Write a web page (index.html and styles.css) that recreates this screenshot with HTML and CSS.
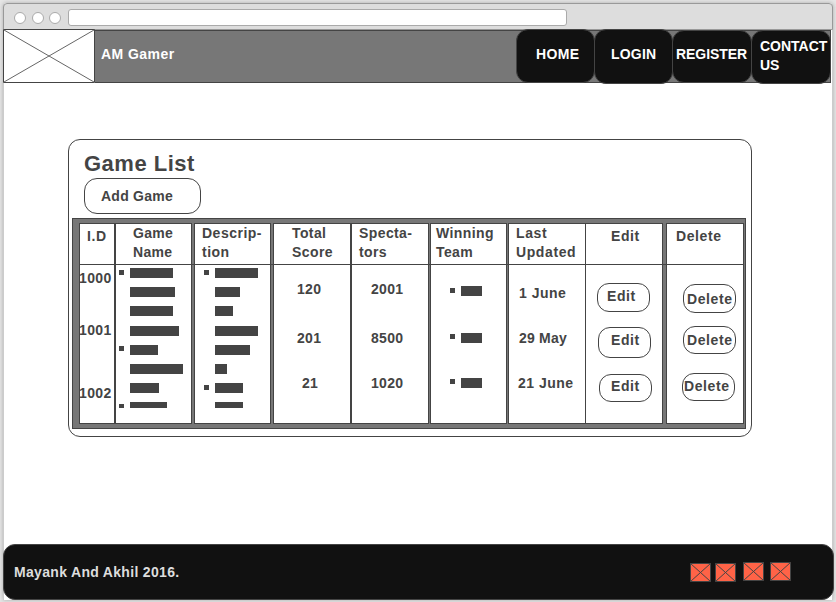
FILE: index.html
```html
<!DOCTYPE html>
<html lang="en">
<head>
<meta charset="utf-8">
<title>AM Gamer</title>
<link rel="stylesheet" href="styles.css">
</head>
<body>
<div class="window">
  <div class="chrome"><i class="dot"></i><i class="dot"></i><i class="dot"></i><span class="address"></span></div>
  <header class="header">
    <svg class="logo" width="92" height="54" viewBox="0 0 92 54"><path class="frame" d="M.5.5h91v53H.5z"/><path class="cross" d="M1 1l90 52M91 1L1 53"/></svg>
    <div class="bar">
      <span class="brand">AM Gamer</span>
      <nav class="nav">
        <a class="home">HOME</a><a class="login">LOGIN</a><a class="register">REGISTER</a><a class="contact">CONTACT US</a>
      </nav>
    </div>
  </header>
  <main class="card">
    <h1>Game List</h1>
    <button class="pill add">Add Game</button>
    <div class="table">
      <section class="col c-id"><h2>I.D</h2><div class="body"><p>1000</p><p>1001</p><p>1002</p></div></section>
      <section class="col c-name"><h2>Game<br>Name</h2>
        <ul class="lines">
          <li class="mark"><b style="width:43px"></b></li><li><b style="width:45px"></b></li><li><b style="width:43px"></b></li><li class="wide"><b style="width:49px"></b></li><li class="mark high"><b style="width:28px"></b></li><li><b style="width:53px"></b></li><li><b style="width:29px"></b></li><li class="mark cut"><b style="width:37px"></b></li>
        </ul></section>
      <section class="col c-desc"><h2>Descrip-<br>tion</h2>
        <ul class="lines">
          <li class="mark"><b style="width:43px"></b></li><li><b style="width:25px"></b></li><li><b style="width:18px"></b></li><li class="wide"><b style="width:43px"></b></li><li><b style="width:35px"></b></li><li><b style="width:12px"></b></li><li class="mark"><b style="width:28px"></b></li><li class="cut"><b style="width:28px"></b></li>
        </ul></section>
      <section class="col c-score"><h2>Total<br>Score</h2><div class="body"><p>120</p><p>201</p><p class="short">21</p></div></section>
      <section class="col c-spec"><h2>Specta-<br>tors</h2><div class="body"><p>2001</p><p>8500</p><p>1020</p></div></section>
      <section class="col c-team"><h2>Winning<br>Team</h2>
        <ul class="lines"><li class="mark"><b></b></li><li class="mark high"><b></b></li><li class="mark high"><b></b></li></ul></section>
      <section class="col c-date"><h2>Last<br>Updated</h2><div class="body"><p>1 June</p><p>29 May</p><p>21 June</p></div></section>
      <section class="col c-edit"><h2>Edit</h2><div class="body"><button class="pill e1">Edit</button><button class="pill e2">Edit</button><button class="pill e3">Edit</button></div></section>
      <section class="col c-del"><h2>Delete</h2><div class="body"><button class="pill d1">Delete</button><button class="pill d2">Delete</button><button class="pill d3">Delete</button></div></section>
    </div>
  </main>
  <footer class="footer">
    <span>Mayank And Akhil 2016.</span>
    <div class="social">
      <svg width="21" height="19" viewBox="0 0 21 19"><path d="M.5.5h20v18H.5zL20.5 18.5M20.5.5L.5 18.5"/></svg>
      <svg width="21" height="19" viewBox="0 0 21 19"><path d="M.5.5h20v18H.5zL20.5 18.5M20.5.5L.5 18.5"/></svg>
      <svg class="third" width="21" height="19" viewBox="0 0 21 19"><path d="M.5.5h20v18H.5zL20.5 18.5M20.5.5L.5 18.5"/></svg>
      <svg class="fourth" width="21" height="19" viewBox="0 0 21 19"><path d="M.5.5h20v18H.5zL20.5 18.5M20.5.5L.5 18.5"/></svg>
    </div>
  </footer>
</div>
</body>
</html>
```
FILE: styles.css
```css
* { box-sizing: border-box; margin: 0; padding: 0; }
body { height: 602px; overflow: hidden; padding: 3px; background: #e6e6e6; font: bold 14px/19px "Liberation Sans", Arial, sans-serif; letter-spacing: .6px; color: #444; }
.window { width: 830px; height: 597px; display: flex; flex-direction: column; background: linear-gradient(#fff, #fff) 1px 0 / 828px 100% no-repeat #ccc; border-radius: 4px 4px 0 0; box-shadow: 0 0 4px #aaa; }
.chrome { height: 27px; flex: none; display: flex; align-items: center; padding: 2px 0 0 10px; background: #ddd; border: 1px solid #999; border-radius: 4px 4px 0 0; }
.dot { width: 12px; height: 12px; margin-right: 5.5px; background: #fff; border: 1px solid #aaa; border-radius: 50%; }
.address { width: 499px; height: 17px; margin-left: 1px; background: #fff; border: 1px solid #aaa; border-radius: 3px; }

.header { height: 54px; margin-top: -1px; flex: none; display: flex; align-items: flex-end; }
.logo { display: block; flex: none; }
.frame { fill: #fff; stroke: #444; }
.cross { fill: none; stroke: #666; }
.bar { width: 736px; height: 53px; display: flex; justify-content: space-between; background: #777; border: solid #444; border-width: 1px 1px 1px 0; }
.brand { padding: 14px 0 0 6px; color: #fff; letter-spacing: .45px; }
.nav { display: flex; flex: none; margin: -2px -1px 0 0; height: 55px; color: #fff; }
.nav a { border: 1px solid #444; border-radius: 12px; background: #111; flex: none; padding-top: 15px; white-space: nowrap; }
.nav .home { width: 79px; height: 54px; padding-left: 19px; letter-spacing: .4px; }
.nav .login { width: 79px; height: 55px; margin-left: -1px; padding-left: 16px; letter-spacing: .2px; }
.nav .register { width: 80px; height: 53px; margin: 1px 0 0 -1px; padding: 14px 0 0 3px; letter-spacing: -.05px; }
.nav .contact { width: 80px; height: 54px; margin: 1px 0 0 -1px; padding: 6px 0 0 8px; white-space: normal; letter-spacing: 0; }

.card { width: 684px; height: 298px; flex: none; margin: 56px 0 0 65px; padding: 10px 0 0 3px; border: 1px solid #444; border-radius: 12px; background: #fff; }
h1 { height: 28px; padding-left: 12px; font-size: 22px; line-height: 27px; letter-spacing: .5px; }
.pill { display: block; background: #fff; border: 1px solid #444; border-radius: 12px; font: inherit; letter-spacing: inherit; color: inherit; text-align: left; white-space: nowrap; }
.add { width: 117px; height: 36px; margin-left: 12px; padding: 1px 0 0 16px; border-radius: 13px; letter-spacing: .25px; }
.table { width: 674px; height: 211px; margin-top: 4px; padding: 4px 2px 4px 6px; display: flex; align-items: flex-start; background: linear-gradient(#444, #444) 6px 45px / 665px 1px no-repeat #777; border: 1px solid #444; }
.col { flex: none; height: 201px; width: 78px; border: 1px solid #444; background: #fff; }
h2 { height: 41px; border-bottom: 1px solid #444; font-size: 14px; line-height: 19px; white-space: nowrap; }
.body { display: flex; flex-direction: column; align-items: flex-start; }
.body p { white-space: nowrap; }
.c-id { width: 36px; }
.c-id h2 { padding: 3px 0 0 7px; }
.c-id p { margin: 33px 0 0 -1px; letter-spacing: .4px; }
.c-id p:first-child { margin-top: 4px; }
.c-id p:last-child { margin-top: 44px; }
.c-name { width: 78px; margin-left: -1px; border-left-width: 2px; }
.c-name h2 { padding-left: 17px; letter-spacing: .3px; }
.c-desc { width: 77px; margin-left: 2px; }
.c-desc h2 { padding-left: 7px; letter-spacing: .5px; }
.c-score { margin-left: 2px; }
.c-score h2 { padding-left: 18px; letter-spacing: .4px; }
.c-score .body { padding: 15px 0 0 23px; letter-spacing: .3px; }
.c-score .short { margin-left: 5px; }
.c-spec { width: 79px; margin-left: -1px; border-left-width: 2px; }
.c-spec h2 { padding-left: 7px; letter-spacing: .4px; }
.c-spec .body { padding: 15px 0 0 19px; letter-spacing: .3px; }
.c-score p:nth-child(2), .c-spec p:nth-child(2) { margin-top: 30px; }
.c-score p:nth-child(3), .c-spec p:nth-child(3) { margin-top: 26px; }
.c-team { width: 77px; margin-left: 1px; }
.c-team h2 { padding-left: 5px; letter-spacing: .4px; }
.c-date { margin-left: 1px; }
.c-date h2 { padding-left: 7px; }
.c-date .body { padding: 19px 0 0 10px; letter-spacing: .5px; }
.c-date p:nth-child(2) { letter-spacing: .2px; }
.c-date p:nth-child(n+2) { margin-top: 26px; }
.c-date p:last-child { margin-left: -1px; }
.c-edit { margin-left: -1px; }
.c-edit h2 { padding: 3px 0 0 25px; }
.c-del { width: 78px; margin-left: 3px; }
.c-del h2 { padding: 3px 0 0 9px; }
.body .pill { width: 53px; height: 29px; padding: 0 0 0 9px; line-height: 19px; }
.c-edit .e1 { margin: 18px 0 0 11px; padding-bottom: 2px; }
.c-edit .e2 { margin: 15px 0 0 12px; height: 31px; padding: 0 0 4px 12px; }
.c-edit .e3 { margin: 16px 0 0 13px; height: 28px; padding: 0 0 3px 11px; }
.c-del .body .pill { padding-left: 3px; }
.c-del .body .d1 { margin: 19px 0 0 16px; padding-top: 1px; }
.c-del .body .d2 { margin: 13px 0 0 16px; height: 28px; }
.c-del .body .d3 { margin: 19px 0 0 15px; height: 28px; padding: 0 0 1px 1px; }

.lines { list-style: none; padding: 3px 0 0 3px; }
.c-desc .lines { padding-left: 9px; }
.lines li { display: flex; height: 10px; margin-bottom: 9px; }
.lines li::before { content: ""; width: 5px; height: 5px; margin: 2px 6px 0 0; flex: none; }
.lines .mark::before { background: #444; }
.lines .high::before { margin-top: 1px; }
.lines .wide { margin-top: 10px; }
.lines .cut { height: 6px; }
.lines .cut::before { height: 4px; }
.lines b { height: 100%; background: #444; flex: none; }
.c-team .lines { padding: 21px 0 0 19px; }
.c-team .lines b { width: 21px; }
.c-team li:nth-child(1) { margin-bottom: 37px; }
.c-team li:nth-child(2) { margin-bottom: 35px; }

.footer { width: 831px; height: 56px; flex: none; margin-top: 107px; padding: 18px 42px 0 10px; display: flex; justify-content: space-between; align-items: flex-start; background: #111; border: 1px solid #444; border-radius: 12px; color: #ddd; letter-spacing: .32px; }
.social { display: flex; }
.social svg { display: block; margin-left: 4px; fill: tomato; stroke: #444; }
.social .third { margin: -1px 0 0 7px; }
.social .fourth { margin: -1px 0 0 6px; }
```
